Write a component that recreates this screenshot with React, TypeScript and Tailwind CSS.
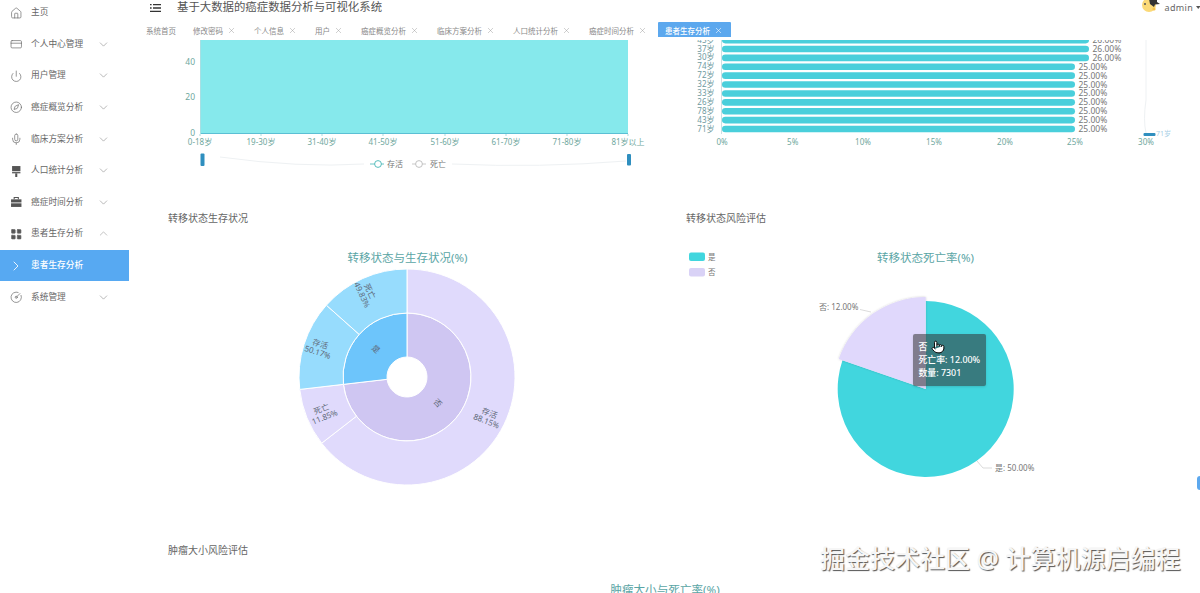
import { Home, CreditCard, Power, Compass, Mic, LayoutGrid, ChevronDown, ChevronUp, ChevronRight, X, CircleGauge, Pointer } from "lucide-react";

const FONT = '"Noto Sans","Noto Sans CJK SC",sans-serif';

function Roller({ className }: { className?: string }) {
  return (
    <svg viewBox="0 0 12 12" className={className}>
      <path d="M2 1h8v5H2z" fill="#555" />
      <path d="M2 6.8h8v1.2H2z" fill="#555" />
      <path d="M5 8h2v3.5H5z" fill="#555" />
    </svg>
  );
}

function Case({ className }: { className?: string }) {
  return (
    <svg viewBox="0 0 12 12" className={className}>
      <path d="M4 3V1.5h4V3" fill="none" stroke="#555" strokeWidth="1" />
      <path d="M1 3.2h10v3H1z" fill="#555" />
      <path d="M1 7h10v3.5H1z" fill="#555" />
    </svg>
  );
}

const menu: { label: string; icon: any; open?: boolean; plain?: boolean }[] = [
  { label: "主页", icon: Home, plain: true },
  { label: "个人中心管理", icon: CreditCard },
  { label: "用户管理", icon: Power },
  { label: "癌症概览分析", icon: Compass },
  { label: "临床方案分析", icon: Mic },
  { label: "人口统计分析", icon: Roller },
  { label: "癌症时间分析", icon: Case },
  { label: "患者生存分析", icon: LayoutGrid, open: true },
];

function Row({ item }: { item: (typeof menu)[number] }) {
  const I = item.icon;
  const filled = item.icon === LayoutGrid;
  return (
    <div className="flex h-[31.6px] items-center pl-[10px] text-[8.7px] text-[#666]">
      <I className="h-[12.5px] w-[12.5px] text-[#666]" strokeWidth={1.3} fill={filled ? "#555" : "none"} />
      <span className="ml-[8.5px] w-[65.5px]">{item.label}</span>
      {!item.plain &&
        (item.open ? (
          <ChevronUp className="h-[13px] w-[13px] text-[#999]" strokeWidth={1.1} />
        ) : (
          <ChevronDown className="h-[13px] w-[13px] text-[#888]" strokeWidth={1.1} />
        ))}
    </div>
  );
}

function Sidebar() {
  return (
    <aside className="-mt-[3px] w-[130px] shrink-0 pr-[1px]">
      {menu.map((m) => (
        <Row key={m.label} item={m} />
      ))}
      <div className="flex h-[31.6px] items-center bg-[#57a9f2] pl-[8px] text-[8.7px] font-medium text-white">
        <ChevronRight className="h-[16px] w-[16px]" strokeWidth={1.3} />
        <span className="ml-[7px]">患者生存分析</span>
      </div>
      <Row item={{ label: "系统管理", icon: CircleGauge }} />
    </aside>
  );
}

const tabs = ["修改密码", "个人信息", "用户", "癌症概览分析", "临床方案分析", "人口统计分析", "癌症时间分析"];

function TabBar() {
  return (
    <div className="flex h-[16px] items-start gap-[4px] pl-[9px] text-[7.5px] text-[#888]">
      <div className="flex h-[15px] items-center pl-[7px] pr-[6px] pt-[4px]">系统首页</div>
      {tabs.map((t) => (
        <div key={t} className="flex h-[15px] items-center px-[7px] pt-[4px]">
          {t}
          <X className="ml-[4px] h-[9px] w-[9px] -translate-y-[1px] text-[#999]" strokeWidth={1.2} />
        </div>
      ))}
      <div className="flex h-[15px] items-center rounded-t-[1px] bg-[#5ca8ee] pl-[7px] pr-[8px] pt-[4px] font-medium text-white">
        患者生存分析
        <X className="ml-[4px] h-[9px] w-[9px] -translate-y-[1px]" strokeWidth={1.5} />
      </div>
    </div>
  );
}

const ageTicks: [string, number][] = [
  ["0-18岁", 200], ["19-30岁", 261], ["31-40岁", 322], ["41-50岁", 383],
  ["51-60岁", 445], ["61-70岁", 506], ["71-80岁", 567], ["81岁以上", 628],
];

function AreaChart() {
  return (
    <svg viewBox="168 40 518 130" className="block h-[130px] w-[518px]" fontFamily={FONT}>
      <rect x="200" y="40" width="428" height="93.5" fill="#86e9ec" />
      <path d="M200 133.5H628" stroke="#5bbfd4" strokeWidth="1" />
      <path d="M200.5 40V134" stroke="#a8dfe3" strokeWidth="1" />
      {[["40", 65], ["20", 100], ["0", 135.5]].map(([t, y]) => (
        <text key={t} x="195" y={y} textAnchor="end" fontSize="8.5" fill="#6fa89e">{t}</text>
      ))}
      {ageTicks.map(([t, x]) => (
        <g key={t}>
          <path d={`M${x} 134V136`} stroke="#8cc" strokeWidth="0.7" />
          <text x={x} y="145" textAnchor="middle" fontSize="8" fill="#6fa89e">{t}</text>
        </g>
      ))}
      <path d="M220 157Q300 168 364 164M452 164Q540 168 626 161" fill="none" stroke="#eef1f3" strokeWidth="1" />
      <rect x="200.5" y="153.5" width="4" height="12.5" rx="1" fill="#2f8fbf" />
      <rect x="627" y="154" width="4" height="11.5" rx="1" fill="#2f8fbf" />
      <path d="M370 164H384" stroke="#44b5b5" strokeWidth="0.8" />
      <circle cx="378" cy="164" r="3.4" fill="#fff" stroke="#44b5b5" strokeWidth="0.9" />
      <text x="387" y="166.8" fontSize="8" fill="#777">存活</text>
      <path d="M412 164H426" stroke="#bbb" strokeWidth="0.8" />
      <circle cx="419" cy="164" r="3.4" fill="#fff" stroke="#bbb" strokeWidth="0.9" />
      <text x="430" y="166.8" fontSize="8" fill="#777">死亡</text>
    </svg>
  );
}

const bars: [string, string][] = [
  ["45岁", "26.00%"], ["37岁", "26.00%"], ["30岁", "26.00%"], ["74岁", "25.00%"],
  ["72岁", "25.00%"], ["32岁", "25.00%"], ["33岁", "25.00%"], ["26岁", "25.00%"],
  ["78岁", "25.00%"], ["43岁", "25.00%"], ["71岁", "25.00%"],
];
const pctTicks: [string, number][] = [
  ["0%", 722], ["5%", 792.7], ["10%", 863], ["15%", 934], ["20%", 1005], ["25%", 1075], ["30%", 1146],
];

function BarChart() {
  return (
    <svg viewBox="686 40 514 130" className="block h-[130px] w-[514px]" fontFamily={FONT}>
      <clipPath id="barclip"><rect x="686" y="40" width="514" height="130" /></clipPath>
      <g clipPath="url(#barclip)">
        <path d="M721.5 40V134" stroke="#bfd8dc" strokeWidth="0.8" />
        {bars.map(([t, v], i) => {
          const y = 40.1 + i * 8.89;
          const end = v === "26.00%" ? 1089 : 1075;
          return (
            <g key={t}>
              <rect x="722" y={y - 3.3} width={end - 722} height="6.6" rx="3.3" fill="#4acfdb" />
              <text x="714.5" y={y + 2.6} textAnchor="end" fontSize="8" fill="#6f9aa0">{t}</text>
              <text x={end + 3.5} y={y + 3} fontSize="8.5" fill="#777">{v}</text>
            </g>
          );
        })}
      </g>
      {pctTicks.map(([t, x]) => (
        <text key={t} x={x} y="145" textAnchor="middle" fontSize="8" fill="#6fa89e">{t}</text>
      ))}
      <path d="M1146 40V100Q1143 120 1146 133" fill="none" stroke="#eef1f3" strokeWidth="1" />
      <rect x="1143.5" y="133" width="12" height="3" rx="1" fill="#2f8fbf" />
      <text x="1156" y="136" fontSize="7" fill="#a8cfe6">71岁</text>
    </svg>
  );
}

function arc(cx: number, cy: number, r0: number, r1: number, a0: number, a1: number) {
  const p = (r: number, a: number) => {
    const t = (a * Math.PI) / 180;
    return `${(cx + r * Math.sin(t)).toFixed(2)} ${(cy - r * Math.cos(t)).toFixed(2)}`;
  };
  const large = a1 - a0 > 180 ? 1 : 0;
  return r0 > 0
    ? `M${p(r0, a0)}L${p(r1, a0)}A${r1} ${r1} 0 ${large} 1 ${p(r1, a1)}L${p(r0, a1)}A${r0} ${r0} 0 ${large} 0 ${p(r0, a0)}Z`
    : `M${cx} ${cy}L${p(r1, a0)}A${r1} ${r1} 0 ${large} 1 ${p(r1, a1)}Z`;
}

function Label({ x, y, r, lines }: { x: number; y: number; r: number; lines: string[] }) {
  return (
    <text transform={`translate(${x} ${y}) rotate(${r})`} textAnchor="middle" fontSize="8" fill="#5f6a7a">
      {lines.map((l, i) => (
        <tspan key={l} x="0" y={(i - (lines.length - 1) / 2) * 8.5 + 3}>{l}</tspan>
      ))}
    </text>
  );
}

function Sunburst() {
  const c = [407, 377] as const;
  const segs: [number, number, number, number, string][] = [
    [20, 64, 0, 263.4, "#cfc6f2"],
    [20, 64, 263.4, 360, "#6dc5fb"],
    [64, 108, 0, 232.2, "#e0dafc"],
    [64, 108, 232.2, 263.4, "#e0dafc"],
    [64, 108, 263.4, 311.7, "#97dcfd"],
    [64, 108, 311.7, 360, "#97dcfd"],
  ];
  return (
    <svg viewBox="168 240 518 260" className="block h-[260px] w-[518px]" fontFamily={FONT}>
      <text x="407.5" y="261.5" textAnchor="middle" fontSize="11.5" fill="#5aa5a5">转移状态与生存状况(%)</text>
      {segs.map((s, i) => (
        <path key={i} d={arc(c[0], c[1], s[0], s[1], s[2], s[3])} fill={s[4]} stroke="#fff" strokeWidth="1" />
      ))}
      <Label x={438} y={403} r={45} lines={["否"]} />
      <Label x={376} y={349} r={42} lines={["是"]} />
      <Label x={488} y={417} r={22} lines={["存活", "88.15%"]} />
      <Label x={323} y={413} r={-22} lines={["死亡", "11.85%"]} />
      <Label x={319} y={348} r={18} lines={["存活", "50.17%"]} />
      <Label x={366} y={293} r={65} lines={["死亡", "49.83%"]} />
    </svg>
  );
}

function Pie() {
  return (
    <svg viewBox="686 240 514 260" className="block h-[260px] w-[514px]" fontFamily={FONT}>
      <defs>
        <filter id="pieshadow" x="-30%" y="-30%" width="160%" height="160%">
          <feDropShadow dx="0" dy="0" stdDeviation="1.2" floodColor="#000" floodOpacity="0.2" />
        </filter>
      </defs>
      <text x="925.5" y="262" textAnchor="middle" fontSize="11.5" fill="#5aa5a5">转移状态死亡率(%)</text>
      <rect x="689" y="252.5" width="16" height="8.5" rx="2" fill="#41d6de" />
      <text x="708" y="259.5" fontSize="7.5" fill="#777">是</text>
      <rect x="689" y="268" width="16" height="8.5" rx="2" fill="#d9d2f6" />
      <text x="708" y="274.5" fontSize="7.5" fill="#777">否</text>
      <path d={arc(925.7, 389, 0, 88, 0, 289)} fill="#41d6de" />
      <path d={arc(925.7, 389, 0, 92, 289, 360)} fill="#e0d8fc" filter="url(#pieshadow)" />
      <path d="M860 309.5L871 312" fill="none" stroke="#ccc" strokeWidth="0.7" />
      <text x="819" y="310" fontSize="8" fill="#777">否: 12.00%</text>
      <path d="M977 461L983 468H992" fill="none" stroke="#ccc" strokeWidth="0.7" />
      <text x="995" y="471" fontSize="8" fill="#777">是: 50.00%</text>
    </svg>
  );
}

function Heading({ children }: { children: string }) {
  return <div className="h-[14px] text-[10px] leading-[14px] text-[#666]">{children}</div>;
}

export default function App() {
  return (
    <div className="relative flex h-[593px] w-[1200px] overflow-hidden bg-white" style={{ fontFamily: FONT }}>
      <Sidebar />
      <main className="min-w-0 flex-1">
        <header className="flex h-[22px] items-start pl-[20px]">
          <svg viewBox="0 0 11 8" className="mt-[3.5px] h-[8px] w-[11px]">
            <path d="M0 .6h1.6M3 .6h8M0 4h1.6M3 4h8M0 7.4h11" stroke="#333" strokeWidth="1.3" />
          </svg>
          <div className="ml-[16px] text-[11.4px] leading-[14px] text-[#555]">基于大数据的癌症数据分析与可视化系统</div>
          <div className="ml-auto flex items-start">
            <svg viewBox="0 0 20 12" className="h-[12px] w-[20px]">
              <ellipse cx="8" cy="5" rx="7" ry="7" fill="#fbd977" />
              <path d="M8 -1h8v3l3 2-5 .5-1 2.5-4-3z" fill="#333" />
              <circle cx="4" cy="4" r="1" fill="#555" />
              <circle cx="13" cy="9" r="1.6" fill="#f6c24a" />
            </svg>
            <span className="ml-[4px] mt-[0.5px] text-[9px] leading-[14px] tracking-[0.3px] text-[#666]">admin</span>
            <svg viewBox="0 0 6 4" className="ml-[2.5px] mt-[5.5px] h-[3px] w-[4.5px]">
              <path d="M0 0h6L3 4z" fill="#555" />
            </svg>
          </div>
        </header>
        <TabBar />
        <section className="mt-[2px] pl-[38px]">
          <div className="flex">
            <AreaChart />
            <BarChart />
          </div>
          <div className="mt-[41px] flex">
            <div className="w-[518px]">
              <Heading>转移状态生存状况</Heading>
              <div className="mt-[15px]"><Sunburst /></div>
            </div>
            <div className="relative w-[514px]">
              <Heading>转移状态风险评估</Heading>
              <div className="mt-[15px]"><Pie /></div>
              <div className="absolute left-[227px] top-[123px] h-[52px] w-[73px] rounded-[2px] bg-[#323232]/55 px-[5.5px] py-[6px] text-[8.9px] font-medium leading-[13px] text-white shadow-sm">
                <div>否</div>
                <div>死亡率: 12.00%</div>
                <div>数量: 7301</div>
              </div>
              <Pointer className="absolute left-[244.5px] top-[129px] h-[14px] w-[14px] text-black" fill="#fff" strokeWidth={1.6} />
            </div>
          </div>
          <div className="mt-[43px]"><Heading>肿瘤大小风险评估</Heading></div>
        </section>
        <div className="mt-[24px] text-center text-[11.6px] text-[#5aa5a5]">肿瘤大小与死亡率(%)</div>
      </main>
      <div className="absolute left-[820px] top-[541px] text-[25px] font-medium leading-[34px] text-[#f6f6f6] [text-shadow:1px_1px_1px_#555]">
        掘金技术社区 @ 计算机源启编程
      </div>
      <div className="absolute -right-[3px] top-[476px] h-[14px] w-[6px] rounded-full bg-[#5ca8ee]" />
    </div>
  );
}
